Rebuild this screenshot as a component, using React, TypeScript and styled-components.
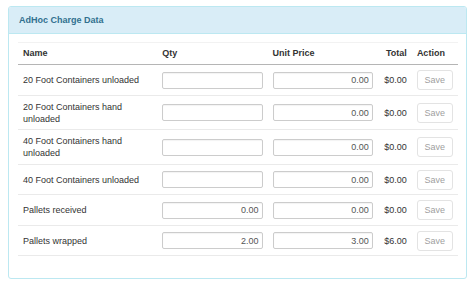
import React from "react";
import styled, { createGlobalStyle } from "styled-components";

const GlobalStyle = createGlobalStyle`
  html, body {
    margin: 0;
    padding: 0;
    background: #fff;
  }
  body {
    font-family: "Liberation Sans", Arial, sans-serif;
    font-size: 9px;
    line-height: 12px;
    color: #333;
  }
`;

const Page = styled.div`
  padding: 6px 8px 8px 8px;
`;

const Panel = styled.div`
  border: 1px solid #bce8f1;
  border-radius: 3px;
  background: #fff;
`;

const PanelHeading = styled.div`
  background: #d9edf7;
  border-bottom: 1px solid #bce8f1;
  border-radius: 2px 2px 0 0;
  padding: 7px 10px 7px 10px;
  color: #31708f;
  font-weight: bold;
  font-size: 9px;
`;

const PanelBody = styled.div`
  padding: 8px 8px 22px 9px;
`;

const Table = styled.table`
  width: 100%;
  border-collapse: collapse;
  table-layout: fixed;
`;

const Th = styled.th<{ $align?: string; $width: number }>`
  width: ${({ $width }) => $width}px;
  text-align: ${({ $align }) => $align || "left"};
  font-weight: bold;
  padding: 4px 5px 5px 5px;
  border-top: 1px solid #f2f2f2;
  border-bottom: 1px solid #b5b5b5;
  vertical-align: bottom;
`;

const Td = styled.td<{ $align?: string }>`
  padding: 5px 5px 4.5px 5px;
  border-bottom: 1px solid #eaeaea;
  vertical-align: middle;
  text-align: ${({ $align }) => $align || "left"};
`;

const Input = styled.input`
  box-sizing: border-box;
  width: 100%;
  height: 17px;
  border: 1px solid #ccc;
  border-radius: 2px;
  padding: 0 3px;
  font-family: "Liberation Sans", Arial, sans-serif;
  font-size: 9px;
  color: #555;
  text-align: right;
  display: block;
  box-shadow: inset 0 1px 1px rgba(0, 0, 0, 0.05);
`;

const SaveButton = styled.button`
  box-sizing: border-box;
  width: 36px;
  height: 20px;
  border: 1px solid #e3e3e3;
  border-radius: 3px;
  background: #fff;
  color: #a0a0a0;
  font-family: "Liberation Sans", Arial, sans-serif;
  font-size: 9px;
  padding: 0;
  display: block;
`;

const rows = [
  { name: "20 Foot Containers unloaded", qty: "", price: "0.00", total: "$0.00" },
  { name: "20 Foot Containers hand unloaded", qty: "", price: "0.00", total: "$0.00" },
  { name: "40 Foot Containers hand unloaded", qty: "", price: "0.00", total: "$0.00" },
  { name: "40 Foot Containers unloaded", qty: "", price: "0.00", total: "$0.00" },
  { name: "Pallets received", qty: "0.00", price: "0.00", total: "$0.00" },
  { name: "Pallets wrapped", qty: "2.00", price: "3.00", total: "$6.00" },
];

export default function App() {
  return (
    <Page>
      <GlobalStyle />
      <Panel>
        <PanelHeading>AdHoc Charge Data</PanelHeading>
        <PanelBody>
          <Table>
            <thead>
              <tr>
                <Th $width={129}>Name</Th>
                <Th $width={100}>Qty</Th>
                <Th $width={100}>Unit Price</Th>
                <Th $width={24} $align="right">Total</Th>
                <Th $width={36}>Action</Th>
              </tr>
            </thead>
            <tbody>
              {rows.map((row) => (
                <tr key={row.name}>
                  <Td>{row.name}</Td>
                  <Td>
                    <Input defaultValue={row.qty} />
                  </Td>
                  <Td>
                    <Input defaultValue={row.price} />
                  </Td>
                  <Td $align="right">{row.total}</Td>
                  <Td>
                    <SaveButton disabled>Save</SaveButton>
                  </Td>
                </tr>
              ))}
            </tbody>
          </Table>
        </PanelBody>
      </Panel>
    </Page>
  );
}
